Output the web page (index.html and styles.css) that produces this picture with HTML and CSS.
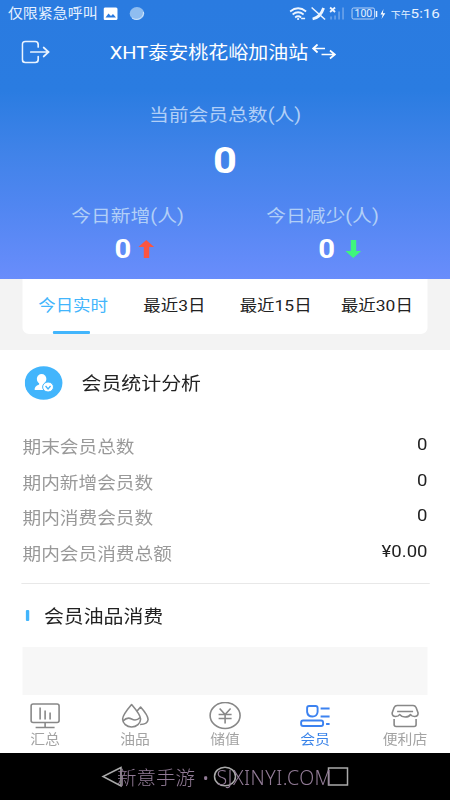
FILE: index.html
```
<!DOCTYPE html>
<html lang="zh-CN">
<head>
<meta charset="utf-8">
<title>会员</title>
<link rel="stylesheet" href="styles.css">
</head>
<body>
<div class="screen">
  <header class="hero">
    <div class="status">
      <span class="carrier">仅限紧急呼叫</span>
      <svg class="status-left" viewBox="0 0 42 16" preserveAspectRatio="none">
        <rect x="0" y="1.500" width="14" height="12.500" rx="1.500" fill="#fff"/>
        <path d="M2 11.500l3-4 2.500 2.500 2-2 3 3.500z" fill="#2a7be0"/>
        <ellipse cx="33.500" cy="7.500" rx="7.300" ry="6.500" fill="#8fbdf0"/>
        <path d="M28.500 12c5 3.500 12 0 11.500-6" stroke="#d4e7fb" fill="none"/>
      </svg>
      <svg class="status-right" viewBox="0 0 98 16" preserveAspectRatio="none" fill="none" stroke="#edf5ff">
        <path d="M1 5.500q8-6.500 16 0M3.500 8.500q5.500-4.500 11 0M6 11.500q3-2.500 6 0" stroke-width="1.700"/>
        <circle cx="9" cy="13" r="1.100" fill="#edf5ff" stroke="none"/>
        <path d="M12 12.500h4" stroke-width="1.500"/>
        <path d="M22.500 1.500L36 13.500" stroke-width="1.500"/>
        <path d="M23.500 13c5-1 9-5 11-11" stroke-width="2.800"/>
        <path d="M41 1.500l5 4.500M46 1.500l-5 4.500" stroke-width="1.800"/>
        <path d="M42 13.500v-3M46 13.500v-4M50 13.500v-8M54 13.500v-12" stroke="#659fe9" stroke-width="1.800"/>
        <rect x="63" y="2" width="22.500" height="11" rx="1.500" stroke="#b7d3f6"/>
        <path d="M87.500 5v6" stroke-width="1.500"/>
        <path d="M94.500 3l-3 5.500h2.200L92.500 13l3.800-5.800h-2.500z" fill="#fff" stroke="none"/>
        <text x="74.300" y="11.500" text-anchor="middle" class="battery">100</text>
      </svg>
      <span class="clock"><small>下午</small>5:16</span>
    </div>
    <div class="titlebar">
      <svg class="logout" viewBox="0 0 29 24" preserveAspectRatio="none" fill="none" stroke="#e9f3ff" stroke-width="1.700" stroke-linecap="round">
        <path d="M17 7V4.500Q17 1.500 14 1.500H4Q1 1.500 1 4.500V19.500Q1 22.500 4 22.500H14Q17 22.500 17 19.500V16.500M9.500 12H27M22.500 7.500L27.500 12L22.500 16.500"/>
      </svg>
      <h1>XHT泰安桃花峪加油站</h1>
      <svg class="swap" viewBox="0 0 25 18" preserveAspectRatio="none" fill="none" stroke="#fff" stroke-width="1.700">
        <path d="M6 1.500L1.500 5.500L6 9.500M1.500 5.500H13.500M18.500 7.500L23.500 11.500L18.500 15.500M23.500 11.500H10"/>
      </svg>
    </div>
    <div class="label">当前会员总数(人)</div>
    <div class="total">0</div>
    <div class="changes">
      <div>
        <div class="label">今日新增(人)</div>
        <div class="count up">0<svg viewBox="0 0 16 18" preserveAspectRatio="none"><path d="M8 0L16 7H11V18H5.500V7H0z" fill="#fb5540"/></svg></div>
      </div>
      <div>
        <div class="label">今日减少(人)</div>
        <div class="count down">0<svg viewBox="0 0 16 18" preserveAspectRatio="none"><path d="M8 18L16 11H11V0H5.500V11H0z" fill="#3ff57c"/></svg></div>
      </div>
    </div>
  </header>
  <div class="tabs-area">
    <div class="tabs">
      <div class="tab active">今日实时</div>
      <div class="tab">最近3日</div>
      <div class="tab">最近15日</div>
      <div class="tab">最近30日</div>
    </div>
  </div>
  <main>
    <div class="section-head">
      <svg class="badge" viewBox="0 0 38 34" preserveAspectRatio="none">
        <ellipse cx="19" cy="17" rx="19" ry="16.800" fill="#42b5fc"/>
        <ellipse cx="17" cy="13" rx="4.800" ry="5" fill="#fff"/>
        <path d="M14.500 16h5v2.500l3 1.500v4H10Q9.500 20 14.500 18.500z" fill="#fff"/>
        <ellipse cx="23.500" cy="21" rx="5.500" ry="5" fill="#fff" stroke="#42b5fc"/>
        <path d="M21 20l2.500 3 2.500-3" fill="none" stroke="#42b5fc" stroke-width="1.300"/>
      </svg>
      <h2>会员统计分析</h2>
    </div>
    <dl>
      <div class="row"><dt>期末会员总数</dt><dd>0</dd></div>
      <div class="row"><dt>期内新增会员数</dt><dd>0</dd></div>
      <div class="row"><dt>期内消费会员数</dt><dd>0</dd></div>
      <div class="row"><dt>期内会员消费总额</dt><dd>¥0.00</dd></div>
    </dl>
    <div class="oil-head"><i></i><h2>会员油品消费</h2></div>
    <div class="chart"></div>
  </main>
  <nav>
    <div class="item">
      <svg viewBox="0 0 34 28" preserveAspectRatio="none"><rect x="3" y="2" width="28" height="18.500" rx="2"/><path d="M12 5.500v12M17 8.500v9M22 10.500v7M17 20.500v4.500M7.500 25.500h19"/></svg>
      <span>汇总</span>
    </div>
    <div class="item">
      <svg viewBox="0 0 34 28" preserveAspectRatio="none"><path d="M13.500 2.500Q4.500 13 4.500 17A9 8 0 0 0 22.500 17Q22.500 13 13.500 2.500zM5 19q4-4.500 8.500-2t8.500-1.500M19 9L22.500 5Q30 13.500 30 17.500Q29.500 22.500 22 22.500"/></svg>
      <span>油品</span>
    </div>
    <div class="item">
      <svg viewBox="0 0 34 28" preserveAspectRatio="none"><ellipse cx="17" cy="13.500" rx="15" ry="13"/><path d="M11.500 6.500L17 12.500L22.500 6.500M17 12.500V21.500M10.500 12.500H23.500M10.500 16.500H23.500"/></svg>
      <span>储值</span>
    </div>
    <div class="item current">
      <svg viewBox="0 0 34 28" preserveAspectRatio="none"><path d="M9 6q0-2 2-2h6.500q2 0 2 2v4q-.5 4.500-5.200 4.500T9 10zM22.500 6.500h9M22.500 14.500h9M28 22h3.500"/><rect x="3" y="18.500" width="22" height="5.500" rx="2"/></svg>
      <span>会员</span>
    </div>
    <div class="item">
      <svg viewBox="0 0 34 28" preserveAspectRatio="none"><path d="M9 3.500H25Q27 3.500 28 5.500L30 11Q30 14.500 26.500 14.500Q23.500 14.500 22.500 12.500Q21 15 17 15Q13.500 15 11.500 12.500Q10.500 14.500 7.500 14.500Q4 14.500 4 11L6 5.500Q7 3.500 9 3.500zM9 9.500H25M6 17V22.500Q6 24.500 8 24.500H26Q28 24.500 28 22.500V17"/></svg>
      <span>便利店</span>
    </div>
  </nav>
  <footer>
    <svg viewBox="0 0 450 47" preserveAspectRatio="none" fill="none" stroke="#aaa" stroke-width="1.500">
      <path d="M121 14.500L103 23.500L121 33z"/>
      <ellipse cx="225" cy="23.500" rx="10.500" ry="9.300"/>
      <rect x="328.500" y="15" width="19" height="17"/>
    </svg>
    <div class="mark">新意手游 • <span>SJXINYI.COM</span></div>
  </footer>
</div>
</body>
</html>
```
FILE: styles.css
```
* { box-sizing: border-box; margin: 0; padding: 0; }
body { width: 450px; height: 800px; overflow: hidden; background: #fff; }
svg { display: block; flex: none; }
h1, h2 { font-weight: 400; }

/* 400px wide layout stretched to the full window width */
.screen {
  width: 400px;
  height: 800px;
  transform: scaleX(1.125);
  transform-origin: 0 0;
  font-family: Roboto, "Noto Sans CJK SC", sans-serif;
  color: #222;
  display: flex;
  flex-direction: column;
  white-space: nowrap;
}

.hero {
  height: 279px;
  flex: none;
  background: linear-gradient(#2a7be0 0, #2a7ce1 90px, #4183e9 155px, #5086f1 205px, #698dfb 279px);
  color: #fff;
}
.status { height: 28px; display: flex; align-items: center; padding: 0 9px 0 7px; font-size: 13.3px; color: #e6f1ff; }
.carrier { line-height: 20px; }
.status-left { width: 37.3px; height: 16px; margin-left: 5px; }
.status-right { width: 87px; height: 16px; margin-left: auto; }
.battery { font: 10.500px Roboto, sans-serif; fill: #e6f1ff; stroke: none; }
.clock { margin-left: 3px; font-size: 13.500px; line-height: 20px; }
.clock small { font-size: 8.800px; }
.titlebar { height: 48px; display: flex; align-items: center; padding-left: 19px; }
.logout { width: 25.500px; height: 24px; }
h1 { font-size: 17.800px; margin-left: 53px; line-height: 24px; padding-top: 1px; }
.swap { width: 22px; height: 18px; margin-left: 3.500px; }
.label { font-size: 17.600px; line-height: 24px; text-align: center; color: #b1cff7; }
.hero > .label { margin-top: 27px; }
.total { font-size: 37px; font-weight: 700; line-height: 40px; text-align: center; margin-top: 14px; }
.changes { display: flex; padding: 0 26.700px; margin-top: 23px; }
.changes > div { flex: 1; }
.count { display: flex; align-items: center; justify-content: center; font-size: 26px; font-weight: 700; line-height: 30px; margin-top: 6px; }
.count svg { width: 14px; height: 18px; }
.up { gap: 6px; padding-left: 12px; }
.down { gap: 9px; padding-left: 30.500px; }

.tabs-area { height: 71px; flex: none; background: #f3f3f3; padding: 0 20px; }
.tabs { height: 55px; display: flex; background: #fff; border-radius: 0 0 6px 6px; }
.tab { flex: 1; position: relative; text-align: center; font-size: 15.500px; line-height: 55px; }
.active { color: #42b5fc; }
.active::after { content: ""; position: absolute; left: 27px; bottom: 0; width: 33px; height: 3.500px; background: #42b5fc; border-radius: 1px; }

main { height: 345px; flex: none; padding: 0 20px; overflow: hidden; }
.section-head { height: 66px; display: flex; align-items: center; padding-left: 2px; }
.badge { width: 33.500px; height: 34px; }
h2 { font-size: 17.700px; line-height: 24px; padding-top: 2px; }
.section-head h2 { margin-left: 17px; }
dl { height: 168px; padding-top: 14px; border-bottom: 1.500px solid #e8e8e8; margin: 0 -1.500px; }
.row { height: 35.600px; display: flex; justify-content: space-between; padding: 0 1.500px; line-height: 36px; }
dt { font-size: 16.600px; color: #999; }
dd { font-size: 16.500px; line-height: 29px; }
.oil-head { height: 63px; display: flex; align-items: center; padding-left: 2.500px; }
.oil-head i { width: 3.500px; height: 11px; border-radius: 1px; background: #42b5fc; }
.oil-head h2 { margin-left: 13px; }
.chart { height: 48px; background: #f7f7f7; }

nav { height: 58px; flex: none; display: flex; }
.item { flex: 1; display: flex; flex-direction: column; align-items: center; padding-top: 6.500px; color: #a3a3a3; }
.item svg { width: 30.200px; height: 28px; fill: none; stroke: #888; stroke-width: 1.600; stroke-linejoin: round; }
.item span { font-size: 13.200px; line-height: 20px; }
.current { color: #3983e9; }
.current svg { stroke: #3c82f0; stroke-width: 1.900; }

footer { height: 47px; flex: none; position: relative; background: #000; }
footer svg { width: 400px; height: 47px; }
.mark {
  position: absolute;
  left: 104px;
  top: 11px;
  font: 300 19.500px/28px "Noto Sans", "Noto Sans CJK SC", sans-serif;
  color: #927b96;
  word-spacing: 2px;
  transform: scaleX(.889);
  transform-origin: 0 0;
}
.mark span { letter-spacing: .450px; }
```
